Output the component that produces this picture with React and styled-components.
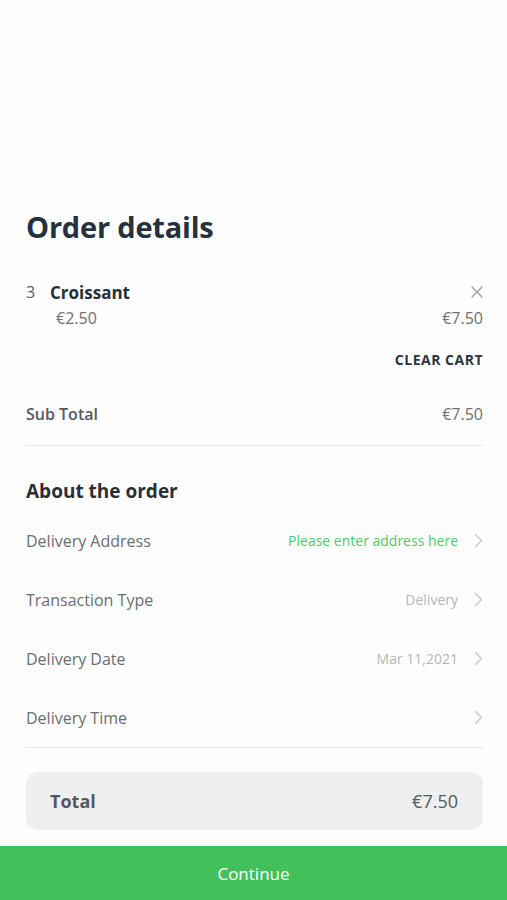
import React from "react";
import styled, { createGlobalStyle } from "styled-components";

const GlobalStyle = createGlobalStyle`
  html, body {
    margin: 0;
    padding: 0;
    background: #fdfdfd;
  }
  body {
    font-family: "Open Sans", "Noto Sans", sans-serif;
    -webkit-font-smoothing: antialiased;
  }
`;

const Page = styled.div`
  width: 507px;
  height: 900px;
  display: flex;
  flex-direction: column;
  background: #fdfdfd;
  overflow: hidden;
`;

const Content = styled.div`
  flex: 1;
  padding: 207px 24px 0 26px;
  display: flex;
  flex-direction: column;
`;

const Title = styled.h1`
  margin: 0;
  font-size: 29px;
  line-height: 40px;
  font-weight: 700;
  color: #263140;
  letter-spacing: -0.2px;
`;

const ItemRow = styled.div`
  margin-top: 32px;
  display: flex;
  align-items: center;
  height: 26px;
`;

const Qty = styled.span`
  font-size: 16px;
  color: #555a60;
  width: 24px;
`;

const ItemName = styled.span`
  flex: 1;
  font-size: 17px;
  font-weight: 700;
  color: #2a2f36;
`;

const Remove = styled.button`
  border: none;
  background: none;
  padding: 0;
  width: 12px;
  height: 12px;
  display: flex;
  cursor: pointer;
`;

const PriceRow = styled.div`
  display: flex;
  justify-content: space-between;
  padding-left: 30px;
  margin-top: 1px;
  font-size: 16px;
  line-height: 24px;
  color: #6e7073;
`;

const ClearCart = styled.button`
  align-self: flex-end;
  margin-top: 20px;
  border: none;
  background: none;
  padding: 0;
  font-family: inherit;
  font-size: 14px;
  font-weight: 700;
  letter-spacing: 0.5px;
  color: #2d3540;
  cursor: pointer;
`;

const SubTotalRow = styled.div`
  display: flex;
  justify-content: space-between;
  align-items: center;
  margin-top: 33px;
  padding-bottom: 19px;
  border-bottom: 1px solid #e6e6e6;
  font-size: 16px;
  line-height: 24px;
`;

const SubLabel = styled.span`
  font-weight: 600;
  color: #55595e;
`;

const SubValue = styled.span`
  color: #6e7073;
`;

const SectionTitle = styled.h2`
  margin: 31px 0 0;
  font-size: 19px;
  line-height: 28px;
  font-weight: 700;
  color: #2a2f36;
`;

const Details = styled.div`
  margin-top: 6px;
  border-bottom: 1px solid #e6e6e6;
`;

const DetailRow = styled.div`
  display: flex;
  align-items: center;
  height: 59px;
`;

const DetailLabel = styled.span`
  flex: 1;
  font-size: 16px;
  color: #6b6e72;
`;

const DetailValue = styled.span`
  font-size: 14px;
  color: ${(p) => (p.$accent ? "#4ccb66" : "#b5b7ba")};
  margin-right: 16px;
`;

const Chevron = styled.svg`
  width: 9px;
  height: 15px;
  flex-shrink: 0;
`;

const TotalBox = styled.div`
  margin-top: 24px;
  height: 58px;
  border-radius: 12px;
  background: #efefef;
  display: flex;
  justify-content: space-between;
  align-items: center;
  padding: 0 25px 0 24px;
  font-size: 18px;
`;

const TotalLabel = styled.span`
  font-weight: 700;
  color: #55595e;
`;

const TotalValue = styled.span`
  color: #55595e;
`;

const ContinueButton = styled.button`
  width: 100%;
  height: 54px;
  border: none;
  background: #42c15a;
  color: #ffffff;
  font-family: inherit;
  font-size: 17px;
  cursor: pointer;
`;

const ChevronIcon = () => (
  <Chevron viewBox="0 0 9 15" fill="none">
    <path d="M1.5 1.5L7.5 7.5L1.5 13.5" stroke="#c4c6c9" strokeWidth="1.4" strokeLinecap="round" strokeLinejoin="round" />
  </Chevron>
);

const details = [
  { label: "Delivery Address", value: "Please enter address here", accent: true },
  { label: "Transaction Type", value: "Delivery" },
  { label: "Delivery Date", value: "Mar 11,2021" },
  { label: "Delivery Time", value: "" },
];

export default function App() {
  return (
    <>
      <GlobalStyle />
      <Page>
        <Content>
          <Title>Order details</Title>
          <ItemRow>
            <Qty>3</Qty>
            <ItemName>Croissant</ItemName>
            <Remove aria-label="Remove">
              <svg viewBox="0 0 12 12" width="12" height="12">
                <path d="M1 1L11 11M11 1L1 11" stroke="#9a9c9f" strokeWidth="1.3" strokeLinecap="round" />
              </svg>
            </Remove>
          </ItemRow>
          <PriceRow>
            <span>€2.50</span>
            <span>€7.50</span>
          </PriceRow>
          <ClearCart>CLEAR CART</ClearCart>
          <SubTotalRow>
            <SubLabel>Sub Total</SubLabel>
            <SubValue>€7.50</SubValue>
          </SubTotalRow>
          <SectionTitle>About the order</SectionTitle>
          <Details>
            {details.map((d) => (
              <DetailRow key={d.label}>
                <DetailLabel>{d.label}</DetailLabel>
                {d.value && <DetailValue $accent={d.accent}>{d.value}</DetailValue>}
                <ChevronIcon />
              </DetailRow>
            ))}
          </Details>
          <TotalBox>
            <TotalLabel>Total</TotalLabel>
            <TotalValue>€7.50</TotalValue>
          </TotalBox>
        </Content>
        <ContinueButton>Continue</ContinueButton>
      </Page>
    </>
  );
}
